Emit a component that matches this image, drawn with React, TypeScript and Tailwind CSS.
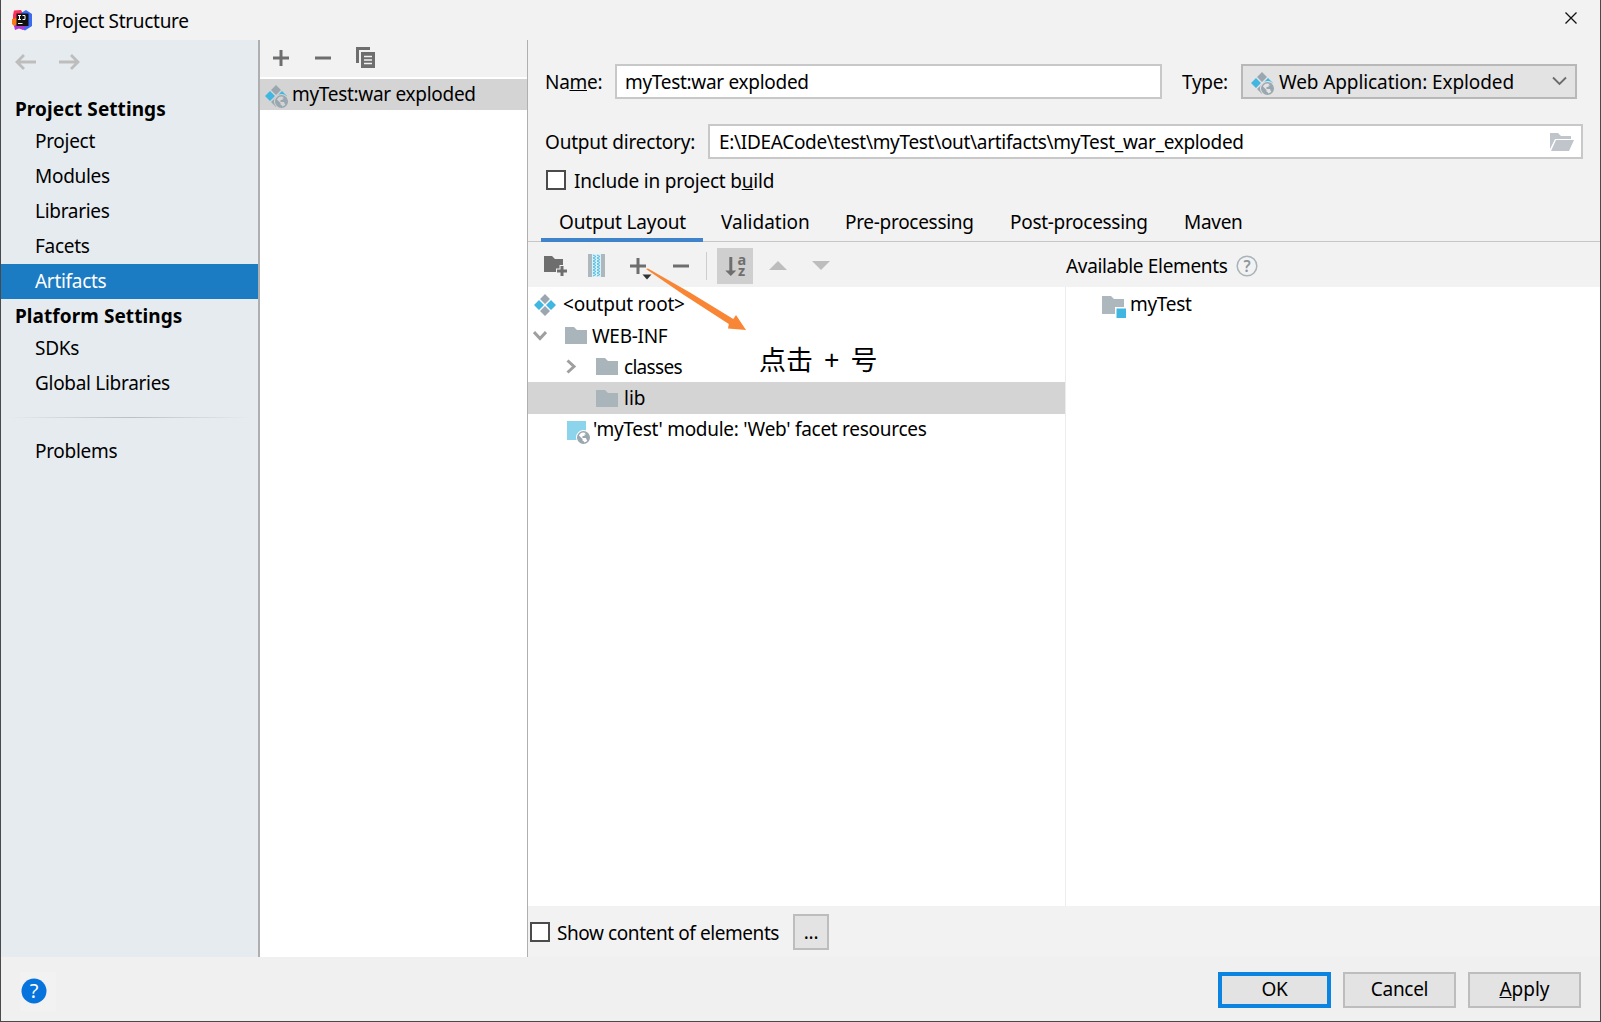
import type { ReactNode } from "react";

const tabs = [
  { label: "Validation", className: "ml-[18px] w-[124px] tracking-normal" },
  { label: "Pre-processing", className: "w-[165px]" },
  { label: "Post-processing", className: "w-[174px]" },
  { label: "Maven", className: "" },
];

export default function App() {
  return (
    <div className="flex h-[1022px] w-[1601px] flex-col overflow-hidden border-x border-b border-[#4a4a4c] bg-[#f2f2f2] font-['Noto_Sans','Noto_Sans_CJK_SC',sans-serif] text-[19px] leading-6 tracking-[-0.3px] whitespace-nowrap text-black">
      <TitleBar />
      <div className="flex h-[917px]">
        <Sidebar />
        <ArtifactList />
        <Editor />
      </div>
      <Footer />
    </div>
  );
}

function TitleBar() {
  return (
    <div className="flex h-10 items-center pl-[11px]">
      <IdeaLogo />
      <span className="mt-0.5 ml-[11px]">Project Structure</span>
      <svg className="mr-[23px] mb-1 ml-auto" width="12" height="12" viewBox="0 0 12 12">
        <path d="M.5.5l11 11M11.5.5l-11 11" stroke="#111" strokeWidth="1.3" />
      </svg>
    </div>
  );
}

function Sidebar() {
  return (
    <div className="w-[259px] border-r-2 border-[#afafaf] bg-[#e6ebef]">
      <div className="flex h-[52px] gap-[23px] pt-[14px] pl-[14px]">
        <svg width="21" height="16" viewBox="0 0 21 16" fill="none" stroke="#bdbdbd" strokeWidth="2.8">
          <path d="M21 8H2M9 1L2 8l7 7" />
        </svg>
        <svg width="21" height="16" viewBox="0 0 21 16" fill="none" stroke="#bdbdbd" strokeWidth="2.8">
          <path d="M0 8h19M12 1l7 7-7 7" />
        </svg>
      </div>
      <SidebarHeader>Project Settings</SidebarHeader>
      <SidebarItem>Project</SidebarItem>
      <SidebarItem>Modules</SidebarItem>
      <SidebarItem>Libraries</SidebarItem>
      <SidebarItem>Facets</SidebarItem>
      <SidebarItem selected>Artifacts</SidebarItem>
      <SidebarHeader>Platform Settings</SidebarHeader>
      <SidebarItem>SDKs</SidebarItem>
      <SidebarItem>Global Libraries</SidebarItem>
      <div className="mx-2 mt-4 mb-4 h-px bg-linear-to-r from-transparent via-[#bcbec2] to-transparent [--tw-gradient-stops:transparent,#bcbec2_13%,#bcbec2_87%,transparent]" />
      <SidebarItem>Problems</SidebarItem>
    </div>
  );
}

function SidebarHeader({ children }: { children: ReactNode }) {
  return (
    <div className="flex h-8 items-center pt-0.5 pl-[14px] font-bold tracking-[0.07px]">{children}</div>
  );
}

function SidebarItem({ children, selected }: { children: ReactNode; selected?: boolean }) {
  return (
    <div className={`flex h-[35px] items-center pb-0.5 pl-[34px] ${selected ? "bg-[#1b7bc3] text-white" : ""}`}>
      {children}
    </div>
  );
}

function ArtifactList() {
  return (
    <div className="w-[268px] border-r border-[#afafaf] bg-white">
      <div className="flex h-[37px] items-center bg-[#f2f2f2] pb-px pl-[13px]">
        <PlusIcon />
        <MinusIcon className="ml-[26px]" />
        <CopyIcon />
      </div>
      <div className="mt-0.5 flex h-[31px] items-center bg-[#d4d4d4] pl-[5px]">
        <WebArtifactIcon halo="#d4d4d4" />
        <span className="mb-px ml-[3px]">myTest:war exploded</span>
      </div>
    </div>
  );
}

function Editor() {
  return (
    <div className="flex flex-1 flex-col">
      <div className="mt-6 flex h-[35px] items-center pl-[17px]">
        <span className="w-[70px]">
          Na<u>m</u>e:
        </span>
        <div className="flex h-[35px] w-[547px] items-center border-2 border-[#c8c8c8] bg-white pl-[8px]">
          myTest:war exploded
        </div>
        <span className="ml-5 w-[59px]">Type:</span>
        <div className="flex h-[35px] w-[336px] items-center border-2 border-[#b8b8b8] bg-[#e3e3e3] pl-2">
          <WebArtifactIcon halo="#e3e3e3" />
          <span className="ml-1 tracking-[-0.1px]">Web Application: Exploded</span>
          <svg className="mr-2 mb-0.5 ml-auto" width="15" height="10" viewBox="0 0 15 10" fill="none">
            <path d="M1 1.5l6.5 6.5L14 1.5" stroke="#6b6b6b" strokeWidth="1.8" />
          </svg>
        </div>
      </div>

      <div className="mt-[25px] flex h-[35px] items-center pl-[17px]">
        <span className="w-[163px] tracking-[-0.2px]">Output directory:</span>
        <div className="flex h-[35px] w-[875px] items-center border-2 border-[#c8c8c8] bg-white pl-[9px] tracking-[-0.31px]">
          E:\IDEACode\test\myTest\out\artifacts\myTest_war_exploded
          <svg className="mr-[7px] ml-auto" width="24" height="18" viewBox="0 0 24 18" fill="#bfc5ca">
            <path d="M0 0h8l3 3h10v3H5L0 16zM6 7h18l-5 11H1z" />
          </svg>
        </div>
      </div>

      <div className="mt-2.5 flex h-[22px] items-center pl-[18px]">
        <Checkbox />
        <span className="mt-px ml-2 tracking-[-0.2px]">
          Include in project b<u>u</u>ild
        </span>
      </div>

      <div className="mt-[10px] flex h-[41px] border-b border-[#c6c6c6]">
        <div className="ml-[13px] flex h-[41px] w-[162px] items-center justify-center border-b-4 border-[#3f84cb] pt-1 pl-px tracking-[-0.15px]">
          Output Layout
        </div>
        {tabs.map((tab) => (
          <span key={tab.label} className={`flex h-[37px] items-center pt-1 ${tab.className}`}>
            {tab.label}
          </span>
        ))}
      </div>

      <div className="flex h-[45px] items-center pt-0.5">
        <div className="flex w-[538px] items-center pl-4">
          <NewFolderIcon />
          <ArchiveIcon />
          <AddWithArrow />
          <MinusIcon className="ml-[20px]" />
          <div className="ml-[17px] h-7 w-px bg-[#cdcdcd]" />
          <div className="ml-[10px] size-[36px] bg-[#cfcfcf]">
            <svg width="36" height="36" viewBox="0 0 36 36" fill="#6e6e6e">
              <path d="M12.300 9h3v13.500h4L13.800 28l-5.500-5.500h4z" />
              <text x="20.500" y="17" fontSize="14.500" fontWeight="700">a</text>
              <text x="21" y="28" fontSize="14.500" fontWeight="700">z</text>
            </svg>
          </div>
          <svg className="ml-4" width="18" height="9" viewBox="0 0 18 9">
            <path d="M0 9L9 0l9 9z" fill="#bdbdbd" />
          </svg>
          <svg className="ml-[25px]" width="18" height="9" viewBox="0 0 18 9">
            <path d="M0 0h18L9 9z" fill="#bdbdbd" />
          </svg>
        </div>
        <span className="tracking-[-0.33px]">Available Elements</span>
        <svg className="ml-2" width="22" height="22" viewBox="0 0 22 22">
          <circle cx="11" cy="11" r="9.8" fill="none" stroke="#a9b3ba" strokeWidth="1.5" />
          <text x="11" y="16.500" fontSize="15.500" fontWeight="600" textAnchor="middle" fill="#8f979d">?</text>
        </svg>
      </div>

      <div className="flex flex-1 bg-white">
        <OutputTree />
        <div className="flex-1 pt-[2px]">
          <div className="flex h-[31px] items-center pl-[36px]">
            <svg className="mt-1.5" width="25" height="23" viewBox="0 0 25 23">
              <path d="M0 0h9l3 3h10v15H0z" fill="#adb7be" />
              <path d="M13 11h12v12H13z" fill="#fff" />
              <path d="M14.500 12.500H24V22h-9.500z" fill="#40b6e0" />
            </svg>
            <span className="mb-0.5 ml-[3px]">myTest</span>
          </div>
        </div>
      </div>

      <div className="flex h-[51px] items-center pt-px pl-0.5">
        <Checkbox />
        <span className="mt-px ml-[7px] w-[236px] tracking-[-0.42px]">Show content of elements</span>
        <div className="flex size-[36px] items-center justify-center border-2 border-[#bdbdbd] bg-[#e3e3e3]">...</div>
      </div>
    </div>
  );
}

function OutputTree() {
  return (
    <div className="relative w-[538px] border-r border-[#ececec] pt-[2px]">
      <div className="flex h-[31px] items-center pl-[6px]">
        <svg width="22" height="22" viewBox="0 0 22 22">
          <path d="M11 0l5 5-5 5-5-5zM11 12l5 5-5 5-5-5z" fill="#9aa7b0" />
          <path d="M5 6l5 5-5 5-5-5zM17 6l5 5-5 5-5-5z" fill="#40b6e0" />
        </svg>
        <span className="mb-0.5 ml-[7px] tracking-[-0.2px]">&lt;output root&gt;</span>
      </div>
      <div className="flex h-[31px] items-center pl-[5px]">
        <svg width="14" height="12" viewBox="0 0 14 12" fill="none">
          <path d="M1 2l6 6.500L13 2" stroke="#9f9f9f" strokeWidth="3" />
        </svg>
        <FolderIcon className="ml-[18px]" />
        <span className="ml-[5px]">WEB-INF</span>
      </div>
      <div className="flex h-[31px] items-center pl-[38px]">
        <svg width="11" height="15" viewBox="0 0 11 15" fill="none">
          <path d="M1.500 1.500l6.500 6-6.500 6" stroke="#9f9f9f" strokeWidth="3" />
        </svg>
        <FolderIcon className="ml-[19px]" />
        <span className="ml-[6px] tracking-[-0.7px]">classes</span>
      </div>
      <div className="flex h-[32px] items-center bg-[#d4d4d4] pl-[68px]">
        <FolderIcon className="" />
        <span className="ml-[6px] tracking-normal">lib</span>
      </div>
      <div className="flex h-[31px] items-center pl-[39px]">
        <svg className="mt-1.5" width="23" height="23" viewBox="0 0 23 23">
          <path d="M0 0h19v19H0z" fill="#8cd4ec" />
          <Globe halo="#fff" />
        </svg>
        <span className="mb-px ml-[3px] tracking-[-0.28px]">'myTest' module: 'Web' facet resources</span>
      </div>

      {/* callout drawn over the toolbar and the tree */}
      <svg className="absolute -top-[20px] left-[116px]" width="110" height="70" viewBox="0 0 110 70">
        <path d="M2 2l2-.500 42 24L89.300 52l2.700-4 10 15-18-1.500.8-4.500L40 28z" fill="#f98634" />
      </svg>
      <span className="absolute top-[55px] left-[231px] text-[27px] leading-9 tracking-normal [word-spacing:4px]">
        点击 + 号
      </span>
    </div>
  );
}

function Footer() {
  return (
    <div className="flex flex-1 items-center gap-3 bg-[#f0f0f0] pr-[19px] pl-[19px]">
      <div className="mt-1 mr-auto flex h-[39px] w-9 items-center bg-[#f2f2f2]">
        <svg className="ml-px" width="26" height="26" viewBox="0 0 26 26">
          <circle cx="13" cy="13" r="12.500" fill="#0674dc" />
          <text x="13" y="20" fontSize="20" textAnchor="middle" fill="#fff">?</text>
        </svg>
      </div>
      <div className="mt-0.5 flex h-9 w-[113px] items-center justify-center border-4 border-[#0a84e0] bg-[#e3e3e3] pb-0.5">
        OK
      </div>
      <div className="mt-0.5 flex h-9 w-[113px] items-center justify-center border-2 border-[#bdbdbd] bg-[#e3e3e3] pb-0.5">
        Cancel
      </div>
      <div className="mt-0.5 flex h-9 w-[113px] items-center justify-center border-2 border-[#bdbdbd] bg-[#e3e3e3] pb-0.5">
        <span className="tracking-normal">
          <u>A</u>pply
        </span>
      </div>
    </div>
  );
}

function Checkbox() {
  return <div className="size-5 border-2 border-[#4b4b4b] bg-white" />;
}

function PlusIcon() {
  return (
    <svg width="16" height="16" viewBox="0 0 16 16">
      <path d="M8 0v16M0 8h16" stroke="#6e6e6e" strokeWidth="3" />
    </svg>
  );
}

function MinusIcon({ className }: { className: string }) {
  return (
    <svg className={className} width="16" height="16" viewBox="0 0 16 16">
      <path d="M0 8h16" stroke="#6e6e6e" strokeWidth="3" />
    </svg>
  );
}

function AddWithArrow() {
  return (
    <svg className="ml-[25px]" width="23" height="28" viewBox="0 0 23 28">
      <path d="M8 6v16M0 14h16" stroke="#6e6e6e" strokeWidth="3" />
      <path d="M12.500 22.500h9L17 27.500z" fill="#333" />
    </svg>
  );
}

function CopyIcon() {
  return (
    <svg className="ml-[25px]" width="20" height="22" viewBox="0 0 20 22">
      <path d="M0 0h14v3H3v13H0z" fill="#6e6e6e" />
      <path d="M5 5h14v16H5z" fill="#6e6e6e" />
      <path d="M8 9.500h8M8 13h8M8 16.500h8" stroke="#f2f2f2" strokeWidth="1.500" />
    </svg>
  );
}

function NewFolderIcon() {
  return (
    <svg width="23" height="21" viewBox="0 0 23 21">
      <path d="M0 1h8l3 3h8v6h-3.500v3.500H12V17H0z" fill="#6e6e6e" />
      <path d="M18 11v10M13 16h10" stroke="#6e6e6e" strokeWidth="3" />
    </svg>
  );
}

function ArchiveIcon() {
  return (
    <svg className="ml-[21px]" width="17" height="23" viewBox="0 0 17 23">
      <path d="M0 0h4v23H0zM13 0h4v23h-4z" fill="#adb7be" />
      <path d="M4 0h9v23H4z" fill="#d9f0f8" />
      <path d="M5 1l3 1.500L5 4l3 1.500L5 7l3 1.500L5 10l3 1.500L5 13l3 1.500L5 16l3 1.500L5 19l3 1.500L5 22M9 1l3 1.500L9 4l3 1.500L9 7l3 1.500L9 10l3 1.500L9 13l3 1.500L9 16l3 1.500L9 19l3 1.500L9 22" stroke="#52bce2" fill="none" />
    </svg>
  );
}

function FolderIcon({ className }: { className: string }) {
  return (
    <svg className={className} width="22" height="17" viewBox="0 0 22 17">
      <path d="M0 0h9l3 3h10v14H0z" fill="#a9b4bb" />
    </svg>
  );
}

function WebArtifactIcon({ halo }: { halo: string }) {
  return (
    <svg className="mt-1" width="24" height="24" viewBox="0 0 24 24">
      <path d="M11 0l5 5-5 5-5-5zM11 12l5 5-5 5-5-5z" fill="#9aa7b0" />
      <path d="M5 6l5 5-5 5-5-5zM17 6l5 5-5 5-5-5z" fill="#40b6e0" />
      <Globe halo={halo} />
    </svg>
  );
}

function Globe({ halo }: { halo: string }) {
  return (
    <>
      <circle cx="16.500" cy="16.500" r="7.500" fill={halo} />
      <circle cx="16.500" cy="16.500" r="5.800" fill={halo} stroke="#9aa7b0" strokeWidth="1.400" />
      <path d="M11 13.500l4.500 4.500v1.500l1.500 1v2l-4-1.500-2.500-4zM17 11l3.500 1.500 2 4-1.500 4-1.500-2-.500-1.500h-3.500V15h2v-1.500H19z" fill="#9aa7b0" />
    </>
  );
}

function IdeaLogo() {
  return (
    <svg width="21" height="21" viewBox="0 0 21 21">
      <path d="M1 5l1-4.500 7-.5 3 5-6 10-5-3z" fill="#fe315d" />
      <path d="M0 9l5-1v7l-2 2-3-3z" fill="#f97a12" />
      <path d="M9 3l5-3 6 4v12l-7 4.500L8 18z" fill="#3b6bf0" />
      <path d="M2 16l5-3 7 4-3 3-4-1.500-4 1.500z" fill="#b03ad0" />
      <path d="M4.500 3.500h12V16h-12z" fill="#111" />
      <path d="M6 5.500h3M7.500 5.500v4M6 9.500h3M10.500 5.500h2.500v4H10.500M6 13.500h4.500" stroke="#fff" fill="none" />
    </svg>
  );
}
